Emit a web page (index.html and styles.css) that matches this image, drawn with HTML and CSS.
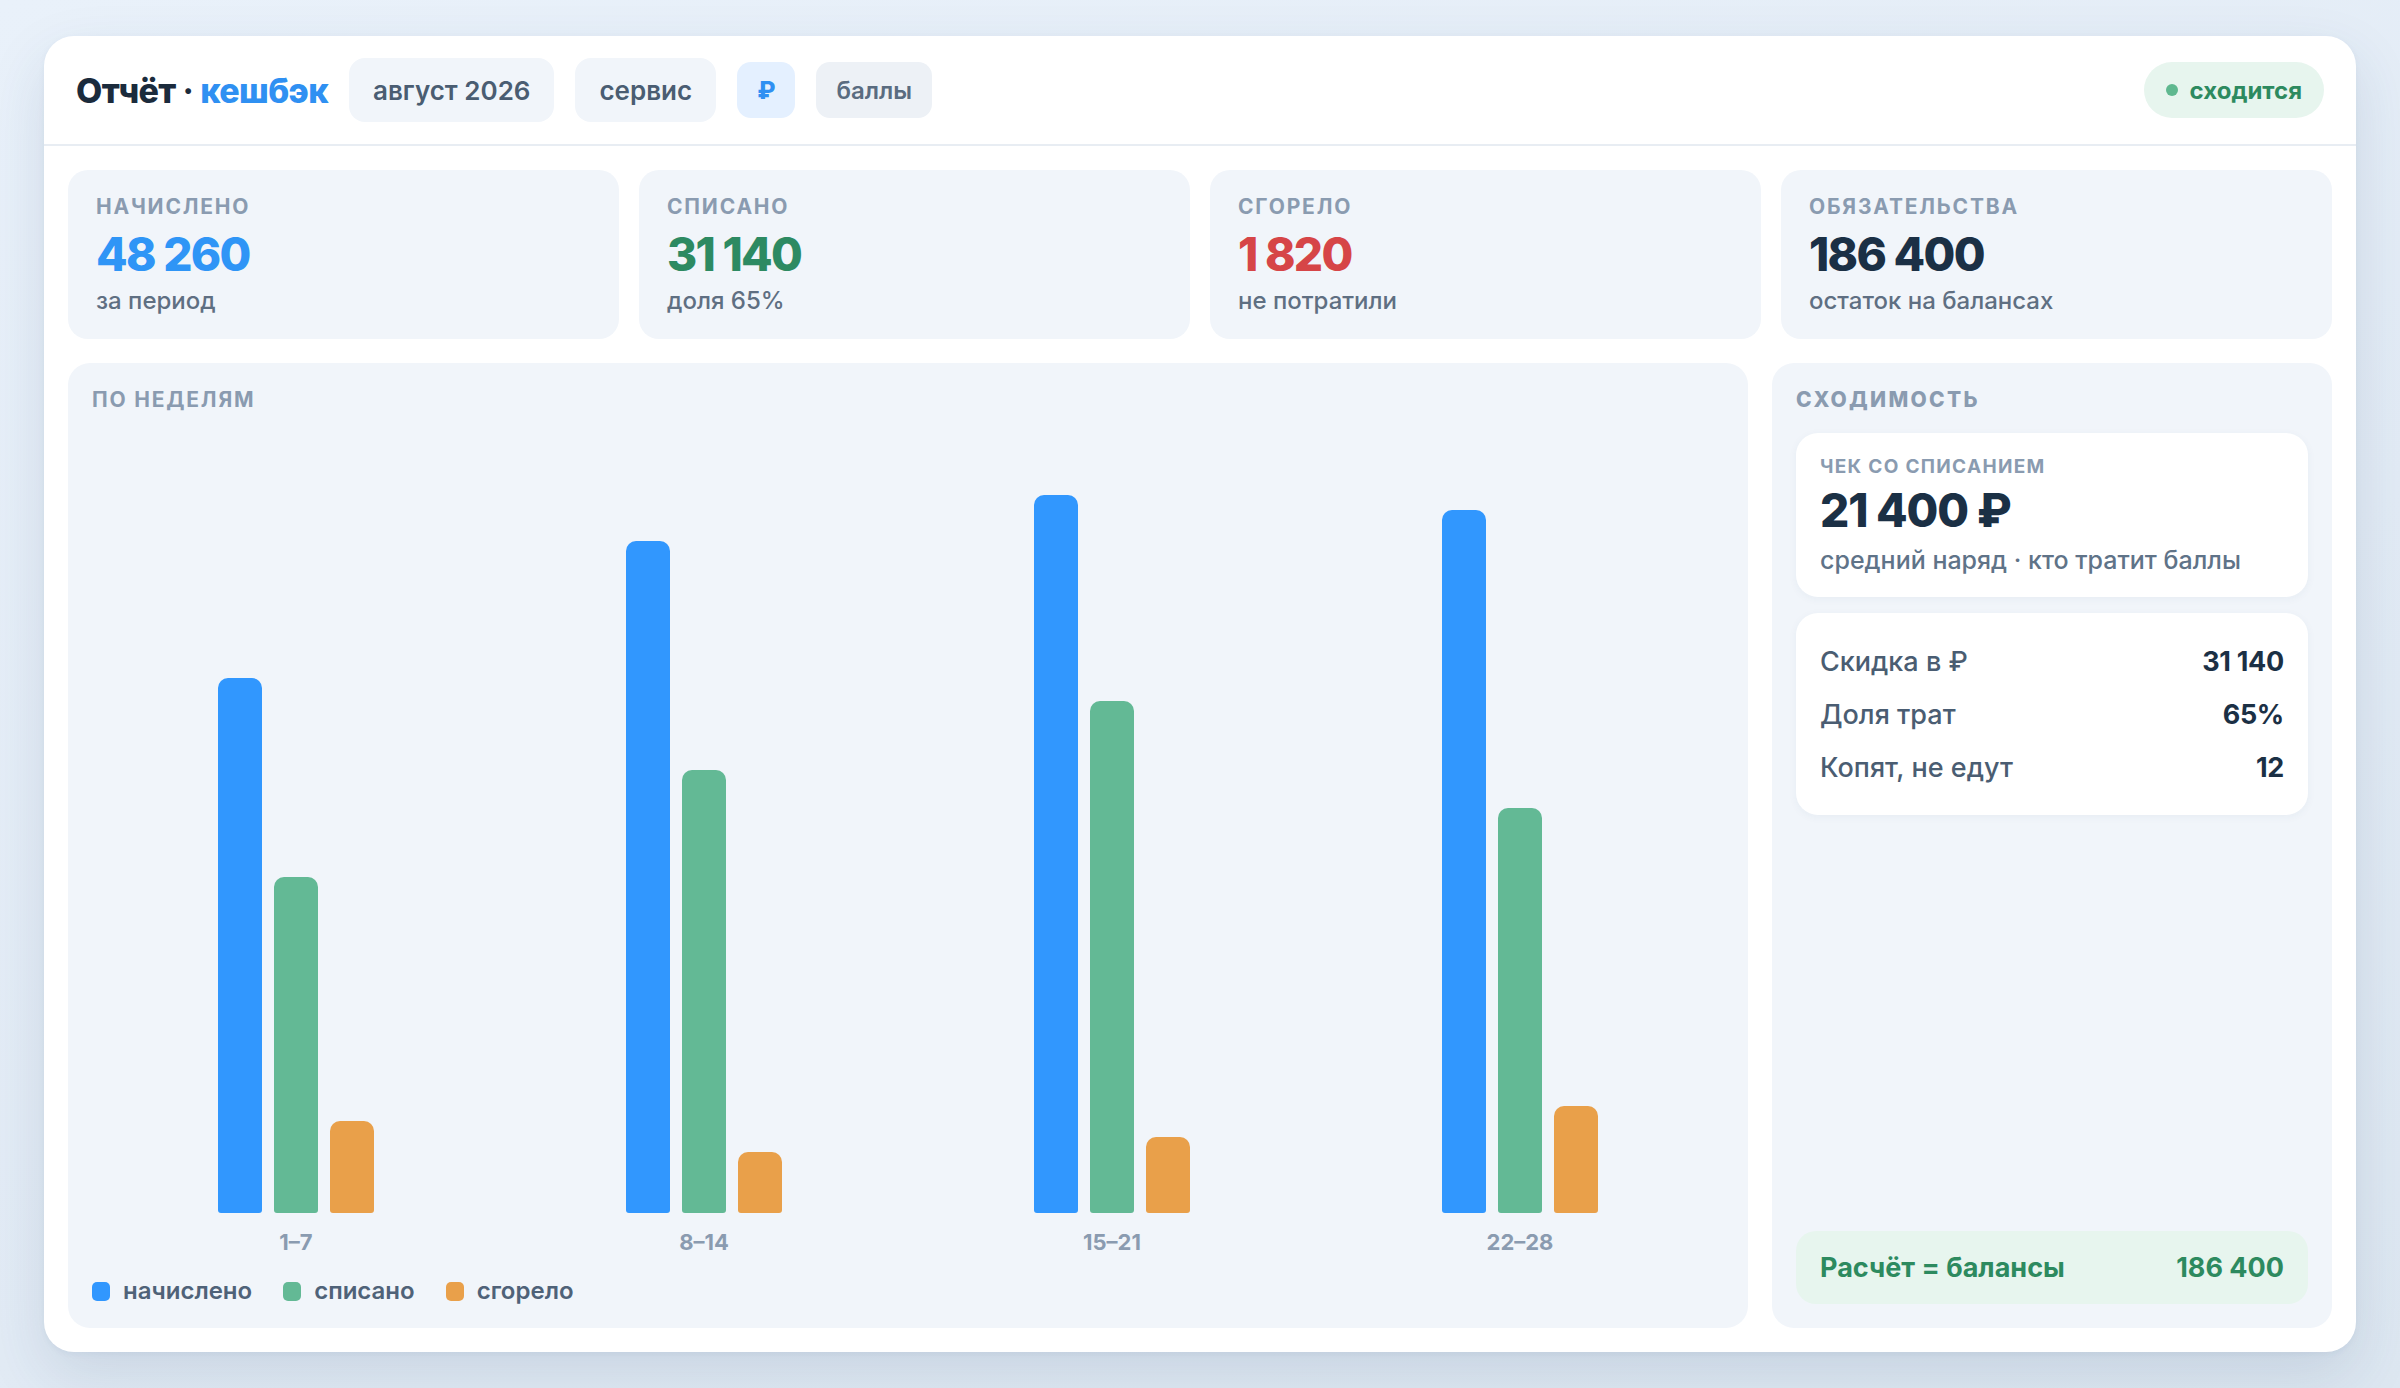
FILE: index.html
```html
<!DOCTYPE html>
<html lang="ru">
<head>
<meta charset="utf-8">
<title>Отчёт · кешбэк</title>
<link rel="stylesheet" href="styles.css">
</head>
<body>
<div class="card">
  <header class="head">
    <div class="title">Отчёт <span class="sep">·</span> <span class="accent">кешбэк</span></div>
    <div class="pill">август 2026</div>
    <div class="pill">сервис</div>
    <div class="chip chip-on">₽</div>
    <div class="chip">баллы</div>
    <div class="status"><span class="status-dot"></span>сходится</div>
  </header>

  <main class="body">
    <section class="stats">
      <div class="stat">
        <div class="label">Начислено</div>
        <div class="value v-blue">48 260</div>
        <div class="sub">за период</div>
      </div>
      <div class="stat">
        <div class="label">Списано</div>
        <div class="value v-green">31 140</div>
        <div class="sub">доля 65%</div>
      </div>
      <div class="stat">
        <div class="label">Сгорело</div>
        <div class="value v-red">1 820</div>
        <div class="sub">не потратили</div>
      </div>
      <div class="stat">
        <div class="label">Обязательства</div>
        <div class="value v-dark">186 400</div>
        <div class="sub">остаток на балансах</div>
      </div>
    </section>

    <section class="main">
      <div class="panel chart">
        <div class="label">По неделям</div>
        <div class="plot">
          <div class="group">
            <div class="bar b-blue" style="height:535px"></div>
            <div class="bar b-green" style="height:336px"></div>
            <div class="bar b-orange" style="height:92px"></div>
          </div>
          <div class="group">
            <div class="bar b-blue" style="height:672px"></div>
            <div class="bar b-green" style="height:443px"></div>
            <div class="bar b-orange" style="height:61px"></div>
          </div>
          <div class="group">
            <div class="bar b-blue" style="height:718px"></div>
            <div class="bar b-green" style="height:512px"></div>
            <div class="bar b-orange" style="height:76px"></div>
          </div>
          <div class="group">
            <div class="bar b-blue" style="height:703px"></div>
            <div class="bar b-green" style="height:405px"></div>
            <div class="bar b-orange" style="height:107px"></div>
          </div>
        </div>
        <div class="xlabels">
          <div>1–7</div>
          <div>8–14</div>
          <div>15–21</div>
          <div>22–28</div>
        </div>
        <div class="legend">
          <div class="leg"><span class="sw b-blue"></span>начислено</div>
          <div class="leg"><span class="sw b-green"></span>списано</div>
          <div class="leg"><span class="sw b-orange"></span>сгорело</div>
        </div>
      </div>

      <aside class="panel side">
        <div class="label label-wide">Сходимость</div>
        <div class="box check">
          <div class="small-label">Чек со списанием</div>
          <div class="check-value">21 400 ₽</div>
          <div class="check-sub">средний наряд · кто тратит баллы</div>
        </div>
        <div class="box rows">
          <div class="row"><span>Скидка в ₽</span><b>31 140</b></div>
          <div class="row"><span>Доля трат</span><b>65%</b></div>
          <div class="row"><span>Копят, не едут</span><b>12</b></div>
        </div>
        <div class="total"><span>Расчёт = балансы</span><span>186 400</span></div>
      </aside>
    </section>
  </main>
</div>
</body>
</html>
```

FILE: styles.css
```css
* { box-sizing: border-box; }

html, body { height: 100%; }

body {
  margin: 0;
  padding: 36px 44px;
  font-family: Inter, "Noto Sans", "DejaVu Sans", sans-serif;
  color: #1b2b3c;
  background: linear-gradient(160deg, #e9f1fa 0%, #e2ebf5 60%, #dde7f1 100%);
}

.card {
  height: 100%;
  background: #ffffff;
  border-radius: 30px;
  box-shadow: 0 24px 60px rgba(40, 70, 110, 0.13), 0 2px 6px rgba(40, 70, 110, 0.05);
  display: flex;
  flex-direction: column;
  overflow: hidden;
}

/* header */
.head {
  display: flex;
  align-items: center;
  gap: 21px;
  padding: 22px 32px;
  border-bottom: 2px solid #e8edf3;
  flex: none;
}

.title {
  font-size: 34px;
  font-weight: 800;
  letter-spacing: -0.6px;
  color: #1b2b3c;
  white-space: nowrap;
}
.title .sep { font-weight: 700; }
.title .accent { color: #2f90f2; }

.pill {
  height: 64px;
  display: flex;
  align-items: center;
  padding: 0 24px;
  border-radius: 16px;
  background: #f1f5fa;
  color: #4a5d72;
  font-size: 26px;
  font-weight: 600;
}

.chip {
  height: 56px;
  display: flex;
  align-items: center;
  padding: 0 20px;
  border-radius: 14px;
  background: #edf1f6;
  color: #5a6c80;
  font-size: 24px;
  font-weight: 600;
}
.chip-on {
  background: #e4f0ff;
  color: #2f90f2;
  font-weight: 800;
}

.status {
  margin-left: auto;
  height: 56px;
  display: flex;
  align-items: center;
  gap: 12px;
  padding: 0 22px;
  border-radius: 28px;
  background: #e7f5ee;
  color: #2d8a5f;
  font-size: 24px;
  font-weight: 700;
}
.status-dot {
  width: 12px;
  height: 12px;
  border-radius: 50%;
  background: #5fb88f;
}

/* body */
.body {
  flex: 1;
  display: flex;
  flex-direction: column;
  gap: 24px;
  padding: 24px;
  min-height: 0;
}

.stats {
  display: grid;
  grid-template-columns: repeat(4, 1fr);
  gap: 20px;
  flex: none;
}

.stat {
  background: #f1f5fa;
  border-radius: 20px;
  padding: 24px 28px;
}

.label {
  font-size: 21px;
  line-height: 26px;
  font-weight: 700;
  letter-spacing: 1.8px;
  text-transform: uppercase;
  color: #8a9bb0;
}

.value {
  margin-top: 8px;
  font-size: 46px;
  line-height: 52px;
  font-weight: 800;
  letter-spacing: -1.7px;
}
.v-blue { color: #2f95f6; }
.v-green { color: #2d8a62; }
.v-red { color: #d64547; }
.v-dark { color: #1b3045; }

.sub {
  margin-top: 6px;
  font-size: 24px;
  line-height: 29px;
  font-weight: 500;
  color: #5f6f82;
}

.main {
  flex: 1;
  display: grid;
  grid-template-columns: 1fr 560px;
  gap: 24px;
  min-height: 0;
}

.panel {
  background: #f1f5fa;
  border-radius: 22px;
  padding: 24px;
  display: flex;
  flex-direction: column;
  min-height: 0;
}

/* chart */
.plot {
  flex: 1;
  display: grid;
  grid-template-columns: repeat(4, 1fr);
  align-items: end;
  min-height: 0;
}

.group {
  display: flex;
  justify-content: center;
  align-items: flex-end;
  gap: 12px;
}

.bar {
  width: 44px;
  border-radius: 10px 10px 3px 3px;
}
.b-blue { background: #3197fe; }
.b-green { background: #63b995; }
.b-orange { background: #e9a04a; }

.xlabels {
  margin-top: 16px;
  display: grid;
  grid-template-columns: repeat(4, 1fr);
  text-align: center;
  font-size: 22px;
  line-height: 26px;
  font-weight: 700;
  color: #8a9bb0;
}

.legend {
  margin-top: 23px;
  display: flex;
  gap: 31px;
  font-size: 24px;
  line-height: 26px;
  font-weight: 600;
  color: #4f6278;
}
.leg {
  display: flex;
  align-items: center;
  gap: 13px;
}
.sw {
  width: 18px;
  height: 19px;
  border-radius: 5px;
}

/* side */
.label-wide { letter-spacing: 2.3px; font-weight: 800; }

.box {
  background: #ffffff;
  border-radius: 22px;
  box-shadow: 0 2px 8px rgba(40, 70, 110, 0.05);
}

.check {
  margin-top: 20px;
  padding: 22px 24px;
}
.small-label {
  font-size: 19px;
  line-height: 24px;
  font-weight: 700;
  letter-spacing: 1.3px;
  text-transform: uppercase;
  color: #8a9bb0;
}
.check-value {
  margin-top: 5px;
  font-size: 46px;
  line-height: 52px;
  font-weight: 800;
  letter-spacing: -1.2px;
  color: #1b3045;
}
.check-sub {
  margin-top: 9px;
  font-size: 25px;
  line-height: 30px;
  font-weight: 500;
  color: #5f7388;
}

.rows {
  margin-top: 16px;
  padding: 22px 24px 21px;
}
.row {
  height: 53px;
  display: flex;
  align-items: center;
  justify-content: space-between;
  font-size: 27px;
  font-weight: 500;
  color: #4a5d72;
}
.row b {
  font-weight: 700;
  color: #1b3045;
  letter-spacing: -0.3px;
}

.total {
  margin-top: auto;
  height: 73px;
  display: flex;
  align-items: center;
  justify-content: space-between;
  padding: 0 24px;
  border-radius: 20px;
  background: #e7f5ee;
  color: #2d8a5f;
  font-size: 27px;
  font-weight: 700;
}
```
